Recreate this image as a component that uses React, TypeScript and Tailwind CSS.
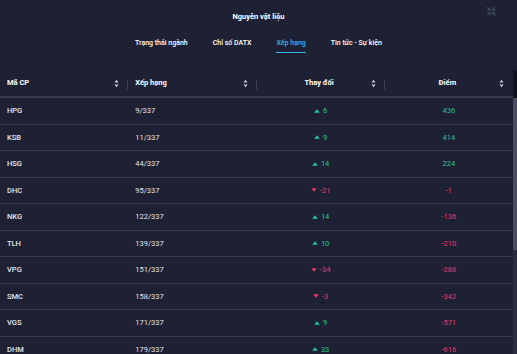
import { Shrink } from "lucide-react";

type Row = { code: string; rank: string; change: number; score: number };

const rows: Row[] = [
  { code: "HPG", rank: "9/337", change: 6, score: 436 },
  { code: "KSB", rank: "11/337", change: 9, score: 414 },
  { code: "HSG", rank: "44/337", change: 14, score: 224 },
  { code: "DHC", rank: "95/337", change: -21, score: -1 },
  { code: "NKG", rank: "122/337", change: 14, score: -136 },
  { code: "TLH", rank: "139/337", change: 10, score: -210 },
  { code: "VPG", rank: "151/337", change: -34, score: -286 },
  { code: "SMC", rank: "158/337", change: -3, score: -342 },
  { code: "VGS", rank: "171/337", change: 9, score: -571 },
  { code: "DHM", rank: "179/337", change: 33, score: -616 },
];

const tabs = ["Trạng thái ngành", "Chỉ số DATX", "Xếp hạng", "Tin tức - Sự kiện"];

const SortIcon = () => (
  <svg width="5" height="9" viewBox="0 0 5 9" className="shrink-0">
    <path d="M2.5 0.8 L4.5 3.4 H0.5 Z" fill="#c9ccd6" />
    <path d="M2.5 8.2 L4.5 5.6 H0.5 Z" fill="#c9ccd6" />
  </svg>
);

const Arrow = ({ up }: { up: boolean }) => (
  <svg width="6" height="4" viewBox="0 0 6 4" className="shrink-0">
    {up ? (
      <path d="M3 0.3 L5.8 3.7 H0.2 Z" fill="#21c79a" />
    ) : (
      <path d="M3 3.7 L5.8 0.3 H0.2 Z" fill="#e8396a" />
    )}
  </svg>
);

const HeadCell = ({ label, center, last }: { label: string; center?: boolean; last?: boolean }) => (
  <div className="relative flex items-center h-full pl-[7px] pr-[9px]">
    <span className={center ? "flex-1 text-center pl-[4px]" : "flex-1"}>{label}</span>
    <SortIcon />
    {!last && <span className="absolute right-0 top-[10px] h-[10px] w-px bg-[#3a3e52]" />}
  </div>
);

export default function App() {
  return (
    <div
      className="relative w-[517px] h-[354px] overflow-hidden bg-[#1e2133] text-[#e4e6ec]"
      style={{ fontFamily: 'Roboto, "Noto Sans", sans-serif' }}
    >
      <div className="pt-[12px] text-center text-[7.5px] font-bold text-white leading-[10px]">Nguyên vật liệu</div>
      <Shrink className="absolute top-[6px] right-[20px] text-[#4f5467]" size={11} strokeWidth={1.8} />

      <div className="mt-[16px] flex justify-center gap-[25px] text-[7px] font-medium leading-[10px]">
        {tabs.map((t) => (
          <div
            key={t}
            className={
              t === "Xếp hạng"
                ? "pb-[4px] border-b border-[#3bb4e6] text-[#3bb4e6]"
                : "pb-[4px] border-b border-transparent text-white"
            }
          >
            {t}
          </div>
        ))}
      </div>

      <div className="mt-[17px] flex">
        <div className="w-[513px]">
          <div className="grid grid-cols-4 h-[28px] border-b-2 border-[#363a4c] text-[7.5px] font-bold text-white">
            <HeadCell label="Mã CP" />
            <HeadCell label="Xếp hạng" />
            <HeadCell label="Thay đổi" center />
            <HeadCell label="Điểm" center last />
          </div>
          {rows.map((r) => {
            const up = r.change > 0;
            return (
              <div
                key={r.code}
                className="grid grid-cols-4 h-[26.5px] items-center border-b border-[#34384a] text-[7.5px]"
              >
                <div className="pl-[7px] font-medium">{r.code}</div>
                <div className="pl-[7px]">{r.rank}</div>
                <div className={`flex items-center justify-center gap-[3px] ${up ? "text-[#21c79a]" : "text-[#e8396a]"}`}>
                  <Arrow up={up} />
                  <span>{r.change}</span>
                </div>
                <div className={`text-center ${r.score >= 0 ? "text-[#21c79a]" : "text-[#e8396a]"}`}>{r.score}</div>
              </div>
            );
          })}
        </div>
        <div className="w-[4px] flex flex-col">
          <div className="h-[28px] bg-[#12141d]" />
          <div className="h-[152px] bg-[#4a4e62]" />
          <div className="flex-1 bg-[#2a2d3e]" />
        </div>
      </div>
    </div>
  );
}
